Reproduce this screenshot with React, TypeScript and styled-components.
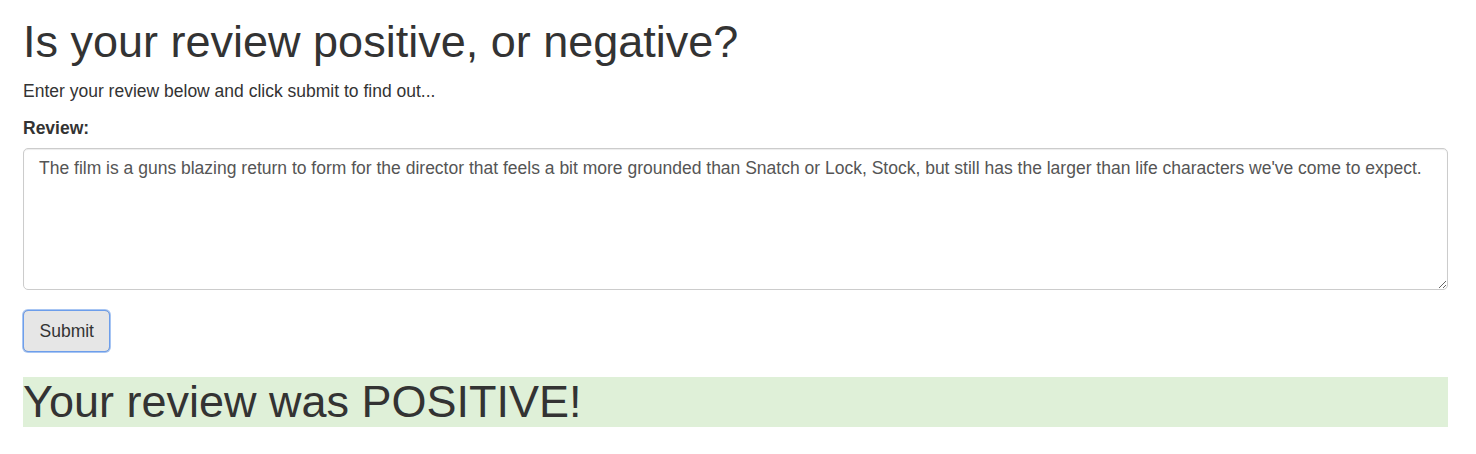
import React, { useState } from "react";
import styled, { createGlobalStyle } from "styled-components";

const GlobalStyle = createGlobalStyle`
  html, body { margin: 0; padding: 0; background: #fff; }
  body {
    font-family: "Liberation Sans", Arial, Helvetica, sans-serif;
    font-size: 17.5px;
    line-height: 1.42857;
    color: #333;
  }
  * { box-sizing: border-box; }
`;

const Page = styled.div`
  padding: 0 28px 0 23px;
`;

const Title = styled.h1`
  font-size: 45px;
  font-weight: 400;
  line-height: 1.1;
  margin: 17px 0 12.5px;
  color: #333;
`;

const Intro = styled.p`
  margin: 0 0 12.5px;
`;

const FormGroup = styled.div`
  margin-bottom: 20.5px;
`;

const Label = styled.label`
  display: block;
  font-weight: 700;
  margin-bottom: 6.25px;
`;

const TextArea = styled.textarea`
  display: block;
  width: 100%;
  height: 142px;
  padding: 7.5px 15px;
  font-family: inherit;
  font-size: 17.5px;
  line-height: 1.42857;
  color: #555;
  background: #fff;
  border: 1px solid #ccc;
  border-radius: 5px;
  box-shadow: inset 0 1px 1px rgba(0, 0, 0, 0.075);
  resize: vertical;
  outline: none;
`;

const Button = styled.button`
  display: inline-block;
  height: 42px;
  padding: 7.5px 15.5px;
  font-family: inherit;
  font-size: 17.5px;
  line-height: 1.42857;
  color: #333;
  background: #e6e6e6;
  border: 1px solid #adadad;
  border-radius: 5px;
  outline: 1px solid #6d9eeb;
  outline-offset: -1px;
  box-shadow: 0 0 0 1px rgba(109, 158, 235, 0.6);
  cursor: pointer;
`;

const Result = styled.h1<{ $positive: boolean }>`
  font-size: 45px;
  font-weight: 400;
  line-height: 1.1;
  margin: 25px 0 12.5px;
  color: #333;
  background: ${(p) => (p.$positive ? "#dff0d8" : "#f2dede")};
`;

export default function App() {
  const [review, setReview] = useState(
    "The film is a guns blazing return to form for the director that feels a bit more grounded than Snatch or Lock, Stock, but still has the larger than life characters we've come to expect."
  );
  return (
    <Page>
      <GlobalStyle />
      <Title>Is your review positive, or negative?</Title>
      <Intro>Enter your review below and click submit to find out...</Intro>
      <form onSubmit={(e) => e.preventDefault()}>
        <FormGroup>
          <Label htmlFor="review">Review:</Label>
          <TextArea
            id="review"
            rows={5}
            value={review}
            onChange={(e) => setReview(e.target.value)}
          />
        </FormGroup>
        <Button type="submit">Submit</Button>
      </form>
      <Result $positive>Your review was POSITIVE!</Result>
    </Page>
  );
}
